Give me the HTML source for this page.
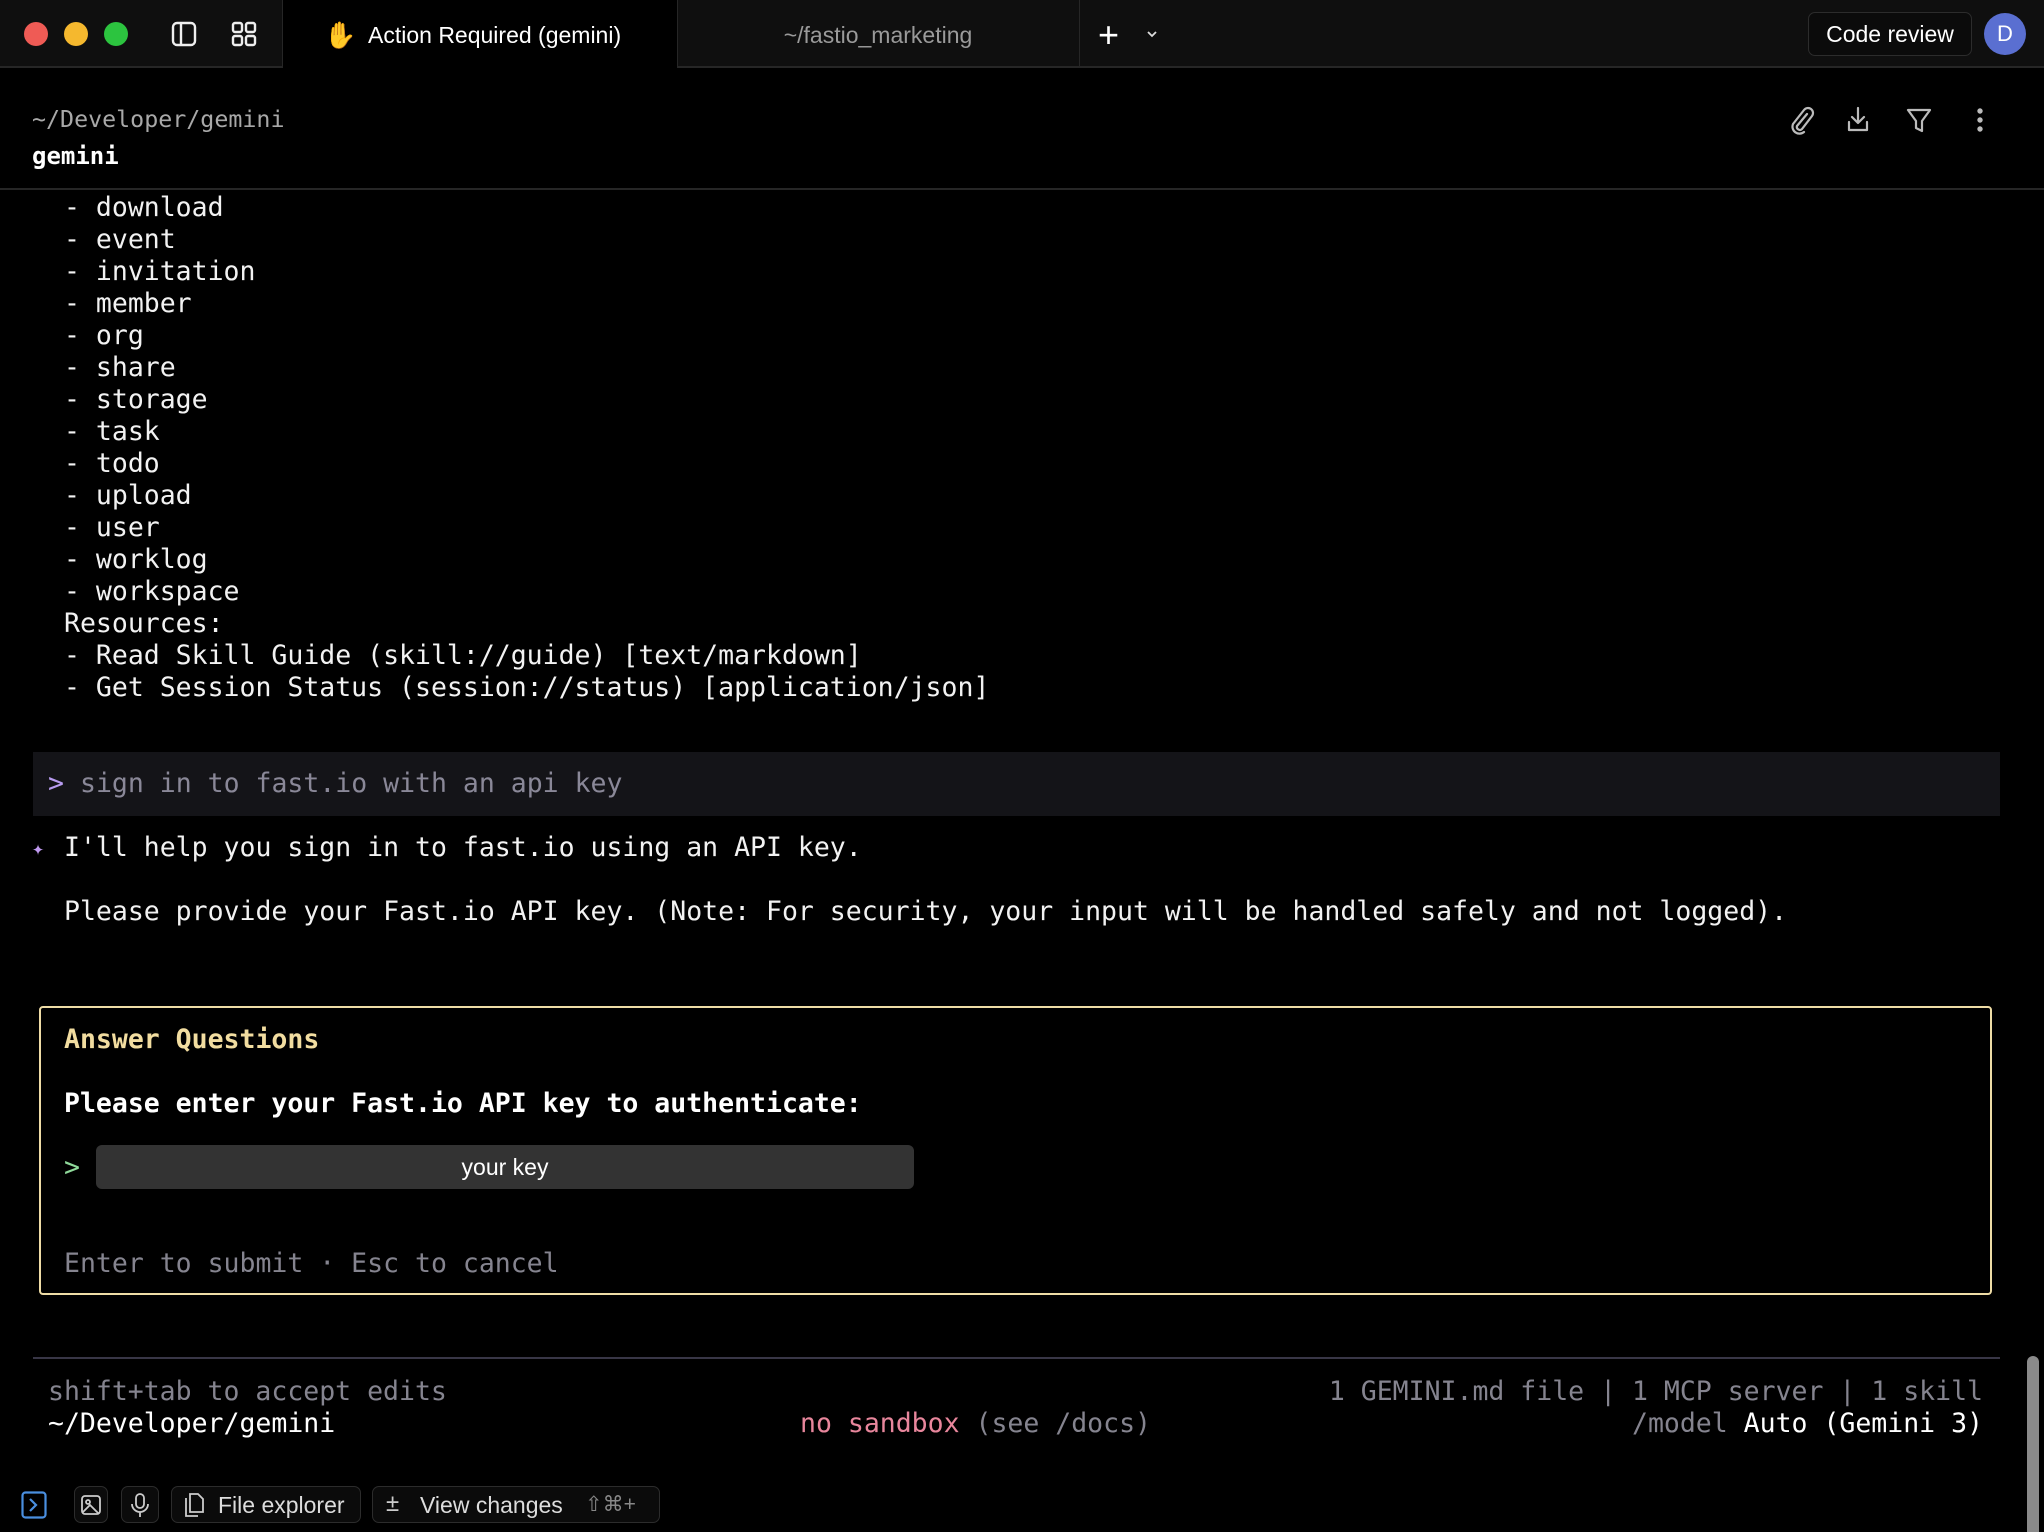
<!DOCTYPE html>
<html><head><meta charset="utf-8"><style>
*{margin:0;padding:0;box-sizing:border-box}
body{width:2044px;height:1532px;background:#000;overflow:hidden;position:relative;font-family:"DejaVu Sans Mono","Liberation Mono",monospace;color:#f2f2f2}
.a{position:absolute;white-space:pre}
.m{font-size:26.5px;line-height:32px}
.s{font-family:"Liberation Sans","DejaVu Sans",sans-serif}
.tb{position:absolute;left:0;top:0;width:2044px;height:68px;background:#0f0f0f;border-bottom:2px solid #262626}
.dot{position:absolute;top:22px;width:24px;height:24px;border-radius:50%}
.btn{position:absolute;border:1.5px solid #2c2c2c;border-radius:7px;background:#0b0b0b}
</style></head><body>
<div class="tb"></div>
<div class="dot" style="left:24px;background:#ef5b55"></div>
<div class="dot" style="left:64px;background:#f5b82e"></div>
<div class="dot" style="left:104px;background:#2cc43f"></div>
<svg class="a" style="left:170px;top:20px" width="28" height="28" viewBox="0 0 28 28" fill="none" stroke="#eee" stroke-width="2.4"><rect x="3" y="3" width="22" height="22" rx="4"/><line x1="11" y1="3" x2="11" y2="25"/></svg>
<svg class="a" style="left:230px;top:20px" width="28" height="28" viewBox="0 0 28 28" fill="none" stroke="#eee" stroke-width="2.4"><rect x="3" y="3" width="9" height="9" rx="2"/><rect x="16" y="3" width="9" height="9" rx="2"/><rect x="3" y="16" width="9" height="9" rx="2"/><rect x="16" y="16" width="9" height="9" rx="2"/></svg>
<div class="a" style="left:282px;top:0;width:396px;height:68px;background:#000;border-left:1px solid #262626;border-right:1px solid #262626"></div>
<div class="a s" style="left:324px;top:20px;font-size:26px">✋</div>
<div class="a s" style="left:368px;top:22px;font-size:23px;color:#fff">Action Required (gemini)</div>
<div class="a s" style="left:678px;top:22px;width:400px;text-align:center;font-size:23px;color:#9a9a9a">~/fastio_marketing</div>
<div class="a" style="left:1079px;top:0;width:1px;height:68px;background:#262626"></div>
<div class="a s" style="left:1098px;top:14px;font-size:36px;color:#fff;font-weight:300">+</div>
<svg class="a" style="left:1146px;top:29px" width="12" height="10" viewBox="0 0 12 10" fill="none" stroke="#ddd" stroke-width="1.8"><path d="M2 3l4 4 4-4"/></svg>
<div class="btn" style="left:1808px;top:12px;width:164px;height:44px"></div>
<div class="a s" style="left:1808px;top:21px;width:164px;text-align:center;font-size:23px;color:#fff">Code review</div>
<div class="a s" style="left:1984px;top:13px;width:42px;height:42px;border-radius:50%;background:#5a6fd1;color:#fff;font-size:22px;text-align:center;line-height:42px">D</div>

<div class="a" style="left:32px;top:106px;font-size:23.3px;color:#a8a8a8">~/Developer/gemini</div>
<div class="a" style="left:32px;top:142px;font-size:24px;font-weight:bold;color:#fff">gemini</div>
<svg class="a" style="left:1786px;top:104px" width="200" height="32" viewBox="0 0 200 32" fill="none" stroke="#bbb" stroke-width="2.2" stroke-linecap="round" stroke-linejoin="round">
<path d="M21 10 L11 22 a3 3 0 0 0 5 3 L26 12 a5 5 0 0 0 -8 -6 L7 20 a7 7 0 0 0 11 8"/>
<path d="M72 4v14M66 13l6 6 6-6M63 18v8h18v-8"/>
<path d="M122 6h22l-8 11v10l-6-3v-7z"/>
<circle cx="194" cy="7" r="1.6" fill="#bbb"/><circle cx="194" cy="16" r="1.6" fill="#bbb"/><circle cx="194" cy="25" r="1.6" fill="#bbb"/>
</svg>
<div class="a" style="left:0;top:188px;width:2044px;height:2px;background:#262626"></div>

<div class="a m" style="left:64px;top:192px;color:#f2f2f2">- download
- event
- invitation
- member
- org
- share
- storage
- task
- todo
- upload
- user
- worklog
- workspace
Resources:
- Read Skill Guide (skill://guide) [text/markdown]
- Get Session Status (session://status) [application/json]</div>

<div class="a" style="left:33px;top:752px;width:1967px;height:64px;background:#141418"></div>
<div class="a m" style="left:48px;top:768px;color:#b89cf0">&gt;</div>
<div class="a m" style="left:80px;top:768px;color:#8a8898">sign in to fast.io with an api key</div>
<div class="a" style="left:32px;top:836px;font-size:20px;color:#c09af0">✦</div>
<div class="a m" style="left:64px;top:832px">I'll help you sign in to fast.io using an API key.</div>
<div class="a m" style="left:64px;top:896px">Please provide your Fast.io API key. (Note: For security, your input will be handled safely and not logged).</div>

<div class="a" style="left:39px;top:1006px;width:1953px;height:289px;border:2.5px solid #eedca6;border-radius:4px"></div>
<div class="a m" style="left:64px;top:1024px;color:#f2dda0;font-weight:bold">Answer Questions</div>
<div class="a m" style="left:64px;top:1088px;color:#fff;font-weight:bold">Please enter your Fast.io API key to authenticate:</div>
<div class="a m" style="left:64px;top:1152px;color:#8fd99a">&gt;</div>
<div class="a s" style="left:96px;top:1145px;width:818px;height:44px;background:#333;border-radius:6px;text-align:center;line-height:44px;font-size:23px;color:#fff">your key</div>
<div class="a m" style="left:64px;top:1248px;color:#85848f">Enter to submit · Esc to cancel</div>

<div class="a" style="left:33px;top:1357px;width:1967px;height:2px;background:#383646"></div>
<div class="a m" style="left:48px;top:1376px;color:#85848f">shift+tab to accept edits</div>
<div class="a m" style="left:48px;top:1408px;color:#fff">~/Developer/gemini</div>
<div class="a m" style="left:800px;top:1408px;color:#e8869c">no sandbox <span style="color:#85848f">(see /docs)</span></div>
<div class="a m" style="right:61px;top:1376px;color:#85848f;text-align:right">1 GEMINI.md file | 1 MCP server | 1 skill</div>
<div class="a m" style="right:61px;top:1408px;color:#85848f;text-align:right">/model <span style="color:#fff">Auto (Gemini 3)</span></div>
<div class="a" style="left:2027px;top:1356px;width:12px;height:176px;background:#8a8a8a;border-radius:6px 6px 0 0"></div>

<svg class="a" style="left:21px;top:1491px" width="26" height="28" viewBox="0 0 26 28" fill="none" stroke="#4a8fe0" stroke-width="2.2"><rect x="1.5" y="1.5" width="23" height="25" rx="3"/><path d="M9 8l6 6-6 6"/></svg>
<div class="btn" style="left:74px;top:1486px;width:34px;height:37px"></div>
<svg class="a" style="left:80px;top:1494px" width="22" height="22" viewBox="0 0 22 22" fill="none" stroke="#ccc" stroke-width="1.8"><rect x="2" y="2" width="18" height="18" rx="3"/><circle cx="8" cy="8" r="2"/><path d="M3 18l7-7 9 9"/></svg>
<div class="btn" style="left:121px;top:1486px;width:38px;height:37px"></div>
<svg class="a" style="left:129px;top:1492px" width="22" height="26" viewBox="0 0 22 26" fill="none" stroke="#ccc" stroke-width="1.8"><rect x="7" y="2" width="8" height="14" rx="4"/><path d="M3 12a8 8 0 0 0 16 0M11 20v5"/></svg>
<div class="btn" style="left:171px;top:1486px;width:190px;height:37px"></div>
<svg class="a" style="left:181px;top:1491px" width="24" height="28" viewBox="0 0 24 28" fill="none" stroke="#ccc" stroke-width="1.8"><path d="M9 3h8l5 5v13H9z"/><path d="M5 7v18h12"/></svg>
<div class="a s" style="left:218px;top:1492px;font-size:23px;color:#ddd">File explorer</div>
<div class="btn" style="left:372px;top:1486px;width:288px;height:37px"></div>
<div class="a s" style="left:386px;top:1490px;font-size:24px;color:#ccc">±</div>
<div class="a s" style="left:420px;top:1492px;font-size:23px;color:#ddd">View changes</div>
<div class="a s" style="left:585px;top:1492px;font-size:21px;color:#888">⇧⌘+</div>
</body></html>
